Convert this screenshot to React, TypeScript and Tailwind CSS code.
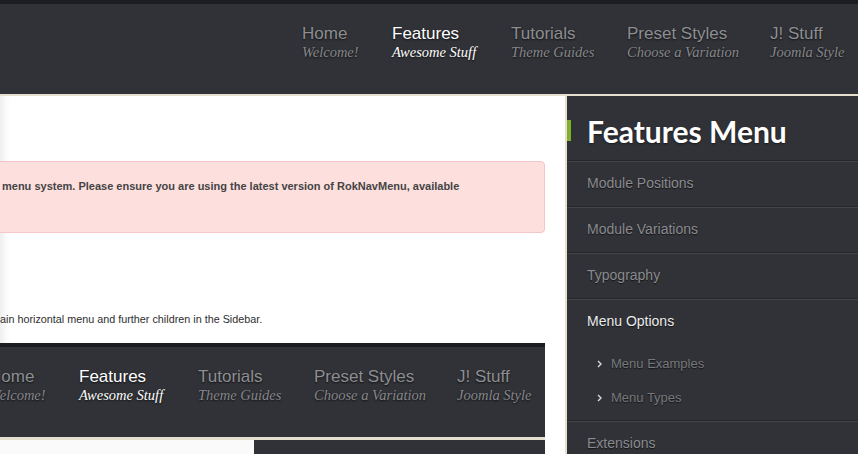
import React from "react";

type Item = { t: string; s: string; w: number; active?: boolean };

const items: Item[] = [
  { t: "Home", s: "Welcome!", w: 90 },
  { t: "Features", s: "Awesome Stuff", w: 119, active: true },
  { t: "Tutorials", s: "Theme Guides", w: 116 },
  { t: "Preset Styles", s: "Choose a Variation", w: 143 },
  { t: "J! Stuff", s: "Joomla Style", w: 110 },
];

function NavBar({ rowClass }: { rowClass: string }) {
  return (
    <div className="h-[94px] bg-[#313237] border-t-[4px] border-[#1c1d20] overflow-hidden">
      <div className={`flex -mt-[4px] ${rowClass}`}>
        {items.map((it) => (
          <div key={it.t} className="shrink-0 flex flex-col" style={{ width: it.w }}>
            <div className={`h-[4px] w-[114px] ${it.active ? "bg-[#7fb12b]" : "bg-transparent"}`} />
            <div className="pl-[14px] pt-[20px] whitespace-nowrap">
              <div
                className={`font-['Liberation_Sans',sans-serif] text-[17px] leading-[20px] [text-shadow:0_1px_2px_rgba(0,0,0,0.7)] ${
                  it.active ? "text-white" : "text-[#8d8e92]"
                }`}
              >
                {it.t}
              </div>
              <div
                className={`font-['Liberation_Serif',serif] italic text-[14.5px] leading-[17px] [text-shadow:0_1px_2px_rgba(0,0,0,0.7)] ${
                  it.active ? "text-white" : "text-[#86878b]"
                }`}
              >
                {it.s}
              </div>
            </div>
          </div>
        ))}
      </div>
    </div>
  );
}

function SideItem({ label, active }: { label: string; active?: boolean }) {
  return (
    <div
      className={`h-[46px] flex items-center pl-[20px] pb-[3px] border-t border-[#45464b] shadow-[0_-1px_0_#25262a] text-[14px] [text-shadow:0_1px_1px_rgba(0,0,0,0.6)] ${
        active ? "text-[#ececec]" : "text-[#8a8b8f]"
      }`}
    >
      {label}
    </div>
  );
}

function SubItem({ label }: { label: string }) {
  return (
    <div className="h-[34px] flex items-center pl-[30px] text-[13px] text-[#77787c] [text-shadow:0_1px_1px_rgba(0,0,0,0.6)]">
      <svg width="5" height="8" viewBox="0 0 5 8" className="mr-[9px]">
        <path d="M1 1 L4 4 L1 7" stroke="#d8d8d8" strokeWidth="1.4" fill="none" />
      </svg>
      {label}
    </div>
  );
}

export default function App() {
  return (
    <div className="w-[858px] h-[454px] overflow-hidden bg-white font-['Liberation_Sans',Arial,sans-serif]">
      <NavBar rowClass="pl-[288px]" />
      <div className="h-[2px] bg-[#e4e0cd]" />
      <div className="flex h-[358px]">
        <div className="w-[565px] shrink-0 bg-white shadow-[inset_9px_0_8px_-6px_rgba(0,0,0,0.09)] overflow-hidden">
          <div className="pt-[65px] pr-[20px]">
            <div className="-ml-[10px] h-[72px] rounded-[4px] border border-[#f4c6c6] bg-[#fddfde] pl-[11px] pt-[16px] text-[11px] leading-[16px] font-bold text-[#444] whitespace-nowrap">
              menu system. Please ensure you are using the latest version of RokNavMenu, available
            </div>
            <p className="mt-[78px] text-[10.8px] leading-[16px] text-[#2e2e2e] whitespace-nowrap">
              ain horizontal menu and further children in the Sidebar.
            </p>
            <div className="mt-[16px] w-[545px] overflow-hidden">
              <NavBar rowClass="-ml-[25px]" />
              <div className="h-[3px] bg-[#e4e0cd]" />
              <div className="flex h-[20px]">
                <div className="w-[254px] bg-[#fafafa]" />
                <div className="flex-1 bg-[#313237]" />
              </div>
            </div>
          </div>
        </div>
        <div className="w-[2px] shrink-0 bg-[#e4e0cd]" />
        <div className="flex-1 bg-[#313237]">
          <div className="h-[65px] flex items-center pt-[4px]">
            <div className="w-[4px] h-[21px] bg-[#7fb12b]" />
            <div className="ml-[16px] font-['Lato',sans-serif] font-bold text-[30px] leading-[34px] text-white [text-shadow:0_1px_2px_rgba(0,0,0,0.5)]">
              Features Menu
            </div>
          </div>
          <SideItem label="Module Positions" />
          <SideItem label="Module Variations" />
          <SideItem label="Typography" />
          <SideItem label="Menu Options" active />
          <div className="pt-[2px] pb-[6px]">
            <SubItem label="Menu Examples" />
            <SubItem label="Menu Types" />
          </div>
          <SideItem label="Extensions" />
        </div>
      </div>
    </div>
  );
}
